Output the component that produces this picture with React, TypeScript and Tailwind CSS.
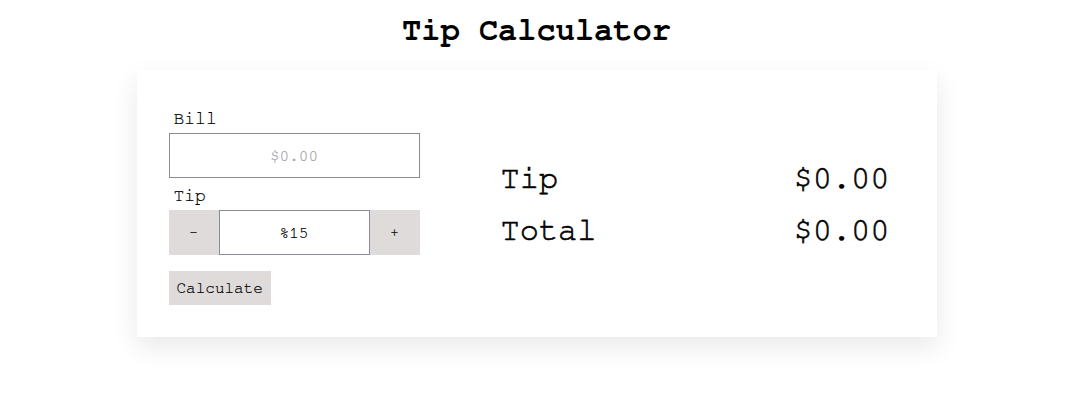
import React from "react";

export default function App() {
  const mono = { fontFamily: 'FreeMono, "Nimbus Mono PS", "Nimbus Mono L", "Liberation Mono", monospace' };
  return (
    <div className="min-h-[413px] w-full bg-white text-black" style={mono}>
      <h1 className="pt-[11px] text-center text-[32px] font-bold leading-[38px]">Tip Calculator</h1>
      <div className="mx-auto mt-[21px] flex w-[800px] items-center bg-white p-8 shadow-[0_10px_25px_rgba(0,0,0,0.09)] [-webkit-text-stroke:0.2px_currentColor]">
        <div className="flex w-[251px] flex-col">
          <label className="pl-[5px] pt-[4px] text-[18px] leading-[27px]">Bill</label>
          <input
            className="h-[45px] w-full border border-[#8b8a97] bg-white text-center text-[16px] placeholder:text-[#a3a3a3] outline-none"
            placeholder="$0.00"
            style={mono}
          />
          <label className="pl-[5px] pt-[5px] text-[18px] leading-[27px]">Tip</label>
          <div className="flex h-[45px]">
            <button className="w-[50px] bg-[#dfdbdb] text-[14px]" style={mono}>–</button>
            <input
              className="w-[151px] border border-[#8b8a97] bg-white text-center text-[16px] outline-none"
              defaultValue="%15"
              style={mono}
            />
            <button className="w-[50px] bg-[#dfdbdb] text-[14px]" style={mono}>+</button>
          </div>
          <div className="mt-4">
            <button className="h-[34px] bg-[#dfdbdb] px-2 text-[16px]" style={mono}>Calculate</button>
          </div>
        </div>
        <div className="ml-[81px] mr-[15px] flex flex-1 flex-col gap-[15px] pt-[2px] text-[32px] leading-[37px] [-webkit-text-stroke:0.6px_currentColor]">
          <div className="flex justify-between">
            <span>Tip</span>
            <span>$0.00</span>
          </div>
          <div className="flex justify-between">
            <span>Total</span>
            <span>$0.00</span>
          </div>
        </div>
      </div>
    </div>
  );
}
